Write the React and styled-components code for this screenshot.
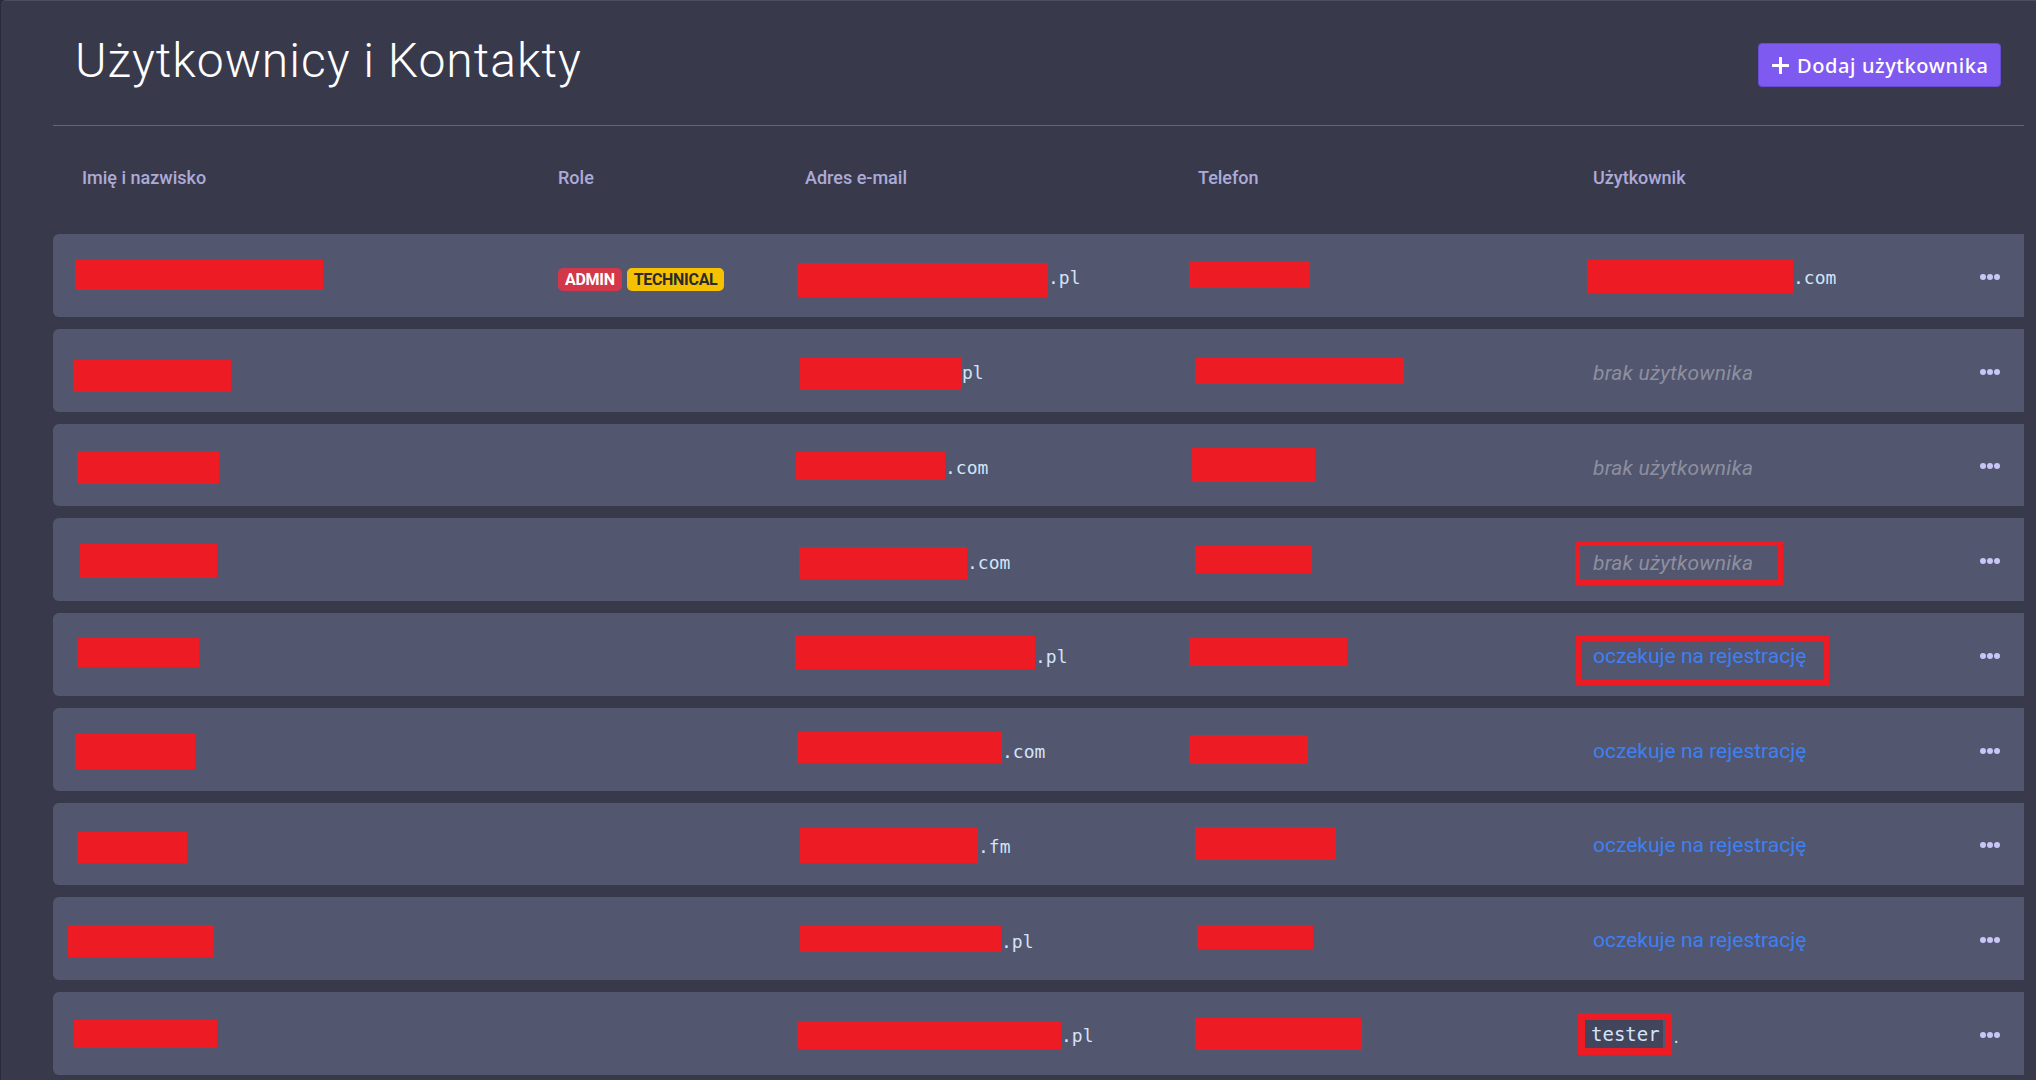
import React from "react";
import styled, { createGlobalStyle } from "styled-components";

const GlobalStyle = createGlobalStyle`
  html, body {
    margin: 0;
    padding: 0;
    background: #2a2c3b;
    font-family: Roboto, "Liberation Sans", Arial, sans-serif;
  }
  * { box-sizing: border-box; }
`;

const Panel = styled.div`
  margin-left: 1px;
  min-height: 1080px;
  background: #383a4c;
  border-top: 1px solid #4b4d61;
  border-top-left-radius: 5px;
  padding: 0 12px 0 52px;
  overflow: hidden;
`;

const TopBar = styled.header`
  height: 124px;
  display: flex;
  align-items: flex-start;
  justify-content: space-between;
  padding: 32px 23px 0 22px;
`;

const Title = styled.h1`
  margin: 0;
  font-family: Roboto, sans-serif;
  font-weight: 300;
  font-size: 48px;
  line-height: 56px;
  color: #ffffff;
  letter-spacing: 1px;
`;

const AddButton = styled.button`
  margin-top: 10px;
  height: 44px;
  width: 243px;
  display: flex;
  align-items: center;
  gap: 8px;
  padding: 0 0 0 13px;
  background: #7f5af0;
  border: 1px solid #6a4bd6;
  border-radius: 4px;
  color: #ffffff;
  font-family: "Noto Sans", "Open Sans", sans-serif;
  font-weight: 500;
  font-size: 20px;
  letter-spacing: 0.6px;
  cursor: pointer;
`;

const Divider = styled.div`
  height: 1px;
  background: #64667e;
`;

const Columns = styled.div`
  display: grid;
  grid-template-columns: 476px 247px 393px 395px 1fr auto;
  align-items: center;
  padding: 0 24px 0 29px;
`;

const HeadRow = styled(Columns)`
  margin-top: 42px;
  margin-bottom: 46px;
  height: 20px;
`;

const HeadCell = styled.div`
  font-family: Roboto, sans-serif;
  font-weight: 500;
  font-size: 18px;
  line-height: 20px;
  color: #aeaad8;
`;

const List = styled.div`
  display: flex;
  flex-direction: column;
  gap: 12px;
`;

const Row = styled(Columns)`
  height: 82.75px;
  background: #52566f;
  border-radius: 6px 0 0 6px;
`;

const Cell = styled.div`
  display: flex;
  align-items: center;
  min-width: 0;
`;

const Redact = styled.span`
  display: inline-block;
  flex: none;
  background: #ed1c24;
  width: ${(p) => p.$w}px;
  height: ${(p) => p.$h}px;
  margin-left: ${(p) => p.$dx || 0}px;
  margin-top: ${(p) => (p.$dy > 0 ? p.$dy * 2 : 0)}px;
  margin-bottom: ${(p) => (p.$dy < 0 ? -p.$dy * 2 : 0)}px;
`;

const Mono = styled.span`
  font-family: "DejaVu Sans Mono", "Liberation Mono", monospace;
  font-size: 18px;
  line-height: 20px;
  color: #d3e4f8;
  margin-top: 6px;
`;

const Badges = styled.div`
  display: flex;
  gap: 5px;
  margin-top: 9px;
`;

const Badge = styled.span`
  display: inline-flex;
  align-items: center;
  height: 23px;
  padding: 0 7px;
  border-radius: 5px;
  font-family: Roboto, sans-serif;
  font-weight: 700;
  font-size: 16px;
  letter-spacing: -0.3px;
  background: ${(p) => (p.$kind === "admin" ? "#d3374a" : "#f6c102")};
  color: ${(p) => (p.$kind === "admin" ? "#ffffff" : "#2b2b2b")};
`;

const NoUser = styled.span`
  font-family: Roboto, sans-serif;
  font-style: italic;
  font-size: 21px;
  letter-spacing: 0.2px;
  color: #8d8f9f;
  line-height: 24px;
  margin-top: ${(p) => p.$mt || 0}px;
`;

const Pending = styled.span`
  font-family: Roboto, sans-serif;
  font-size: 21px;
  color: #3d80f2;
  line-height: 24px;
  margin-top: ${(p) => p.$mt || 0}px;
  margin-bottom: ${(p) => p.$mb || 0}px;
`;

const Outline = styled.span`
  display: inline-flex;
  align-items: center;
  border: ${(p) => p.$b}px solid #ed1c24;
  width: ${(p) => p.$w}px;
  height: ${(p) => p.$h}px;
  margin-left: ${(p) => p.$dx}px;
  padding-left: ${(p) => p.$pl}px;
  margin-top: ${(p) => p.$mt || 0}px;
`;

const CodeTag = styled.code`
  font-family: "DejaVu Sans Mono", "Liberation Mono", monospace;
  font-size: 19px;
  line-height: 28px;
  color: #d3e4f8;
  background: #42455c;
  padding: 0 3px 0 6px;
`;

const Dot = styled.span`
  font-family: "DejaVu Sans Mono", monospace;
  font-size: 14px;
  color: #d3e4f8;
  margin-top: 10px;
`;

const Dots = styled.button`
  display: flex;
  gap: 1px;
  padding: 0;
  margin-top: 3px;
  background: none;
  border: 0;
  cursor: pointer;
  span {
    width: 6px;
    height: 6px;
    border-radius: 50%;
    background: #c9c6f7;
  }
`;

const Plus = () => (
  <svg width="17" height="17" viewBox="0 0 17 17" aria-hidden="true">
    <path d="M8.5 1v15M1 8.5h15" stroke="#fff" strokeWidth="3" strokeLinecap="round" />
  </svg>
);

const rows = [
  { name: [248, 30, -7, 0], roles: true, email: [251, 34, -8, 5], sfx: ".pl", phone: [121, 27, -9, -1], user: { t: "mail", r: [206, 33, -6, 1], sfx: ".com" } },
  { name: [158, 32, -9, 6], email: [162, 32, -5, 4], sfx: "pl", phone: [209, 26, -3, 1], user: { t: "none" } },
  { name: [142, 33, -5, 3], email: [149, 28, -9, 1], sfx: ".com", phone: [123, 34, -6, 0], user: { t: "none" } },
  { name: [137, 34, -2, 1], email: [168, 32, -6, 3], sfx: ".com", phone: [117, 27, -3, 0], user: { t: "none", box: true } },
  { name: [121, 29, -4, -2], email: [240, 33, -10, -2], sfx: ".pl", phone: [158, 28, -9, -2], user: { t: "pending", box: true } },
  { name: [120, 35, -7, 2], email: [205, 31, -8, -2], sfx: ".com", phone: [119, 29, -9, 0], user: { t: "pending" } },
  { name: [110, 31, -5, 4], email: [178, 35, -5, 2], sfx: ".fm", phone: [141, 33, -3, 0], user: { t: "pending" } },
  { name: [146, 32, -14, 2], email: [201, 26, -5, 0], sfx: ".pl", phone: [116, 24, -1, -2], user: { t: "pending" } },
  { name: [143, 28, -8, 1], email: [264, 28, -8, 2], sfx: ".pl", phone: [167, 32, -3, 1], user: { t: "tester" } },
];

const R = ({ v }) => <Redact $w={v[0]} $h={v[1]} $dx={v[2]} $dy={v[3]} />;

const UserCell = ({ u }) => {
  if (u.t === "mail")
    return (
      <Cell>
        <R v={u.r} />
        <Mono>{u.sfx}</Mono>
      </Cell>
    );
  if (u.t === "none") {
    return (
      <Cell>
        {u.box ? (
          <Outline $b={5} $w={208} $h={44} $dx={-18} $pl={13} $mt={6}>
            <NoUser>brak użytkownika</NoUser>
          </Outline>
        ) : (
          <NoUser $mt={6}>brak użytkownika</NoUser>
        )}
      </Cell>
    );
  }
  if (u.t === "pending") {
    return (
      <Cell>
        {u.box ? (
          <Outline $b={5} $w={253} $h={49} $dx={-17} $pl={12} $mt={12}>
            <Pending $mb={8}>oczekuje na rejestrację</Pending>
          </Outline>
        ) : (
          <Pending $mt={3}>oczekuje na rejestrację</Pending>
        )}
      </Cell>
    );
  }
  return (
    <Cell>
      <Outline $b={7} $w={94} $h={42} $dx={-15} $pl={0} $mt={2}>
        <CodeTag>tester</CodeTag>
      </Outline>
      <Dot>.</Dot>
    </Cell>
  );
};

export default function App() {
  return (
    <>
      <GlobalStyle />
      <Panel>
        <TopBar>
          <Title>Użytkownicy i Kontakty</Title>
          <AddButton>
            <Plus />
            Dodaj użytkownika
          </AddButton>
        </TopBar>
        <Divider />
        <HeadRow>
          <HeadCell>Imię i nazwisko</HeadCell>
          <HeadCell>Role</HeadCell>
          <HeadCell>Adres e-mail</HeadCell>
          <HeadCell>Telefon</HeadCell>
          <HeadCell>Użytkownik</HeadCell>
          <HeadCell />
        </HeadRow>
        <List>
          {rows.map((r, i) => (
            <Row key={i}>
              <Cell>
                <R v={r.name} />
              </Cell>
              <Cell>
                {r.roles && (
                  <Badges>
                    <Badge $kind="admin">ADMIN</Badge>
                    <Badge $kind="tech">TECHNICAL</Badge>
                  </Badges>
                )}
              </Cell>
              <Cell>
                <R v={r.email} />
                <Mono>{r.sfx}</Mono>
              </Cell>
              <Cell>
                <R v={r.phone} />
              </Cell>
              <UserCell u={r.user} />
              <Cell>
                <Dots aria-label="więcej">
                  <span />
                  <span />
                  <span />
                </Dots>
              </Cell>
            </Row>
          ))}
        </List>
      </Panel>
    </>
  );
}
